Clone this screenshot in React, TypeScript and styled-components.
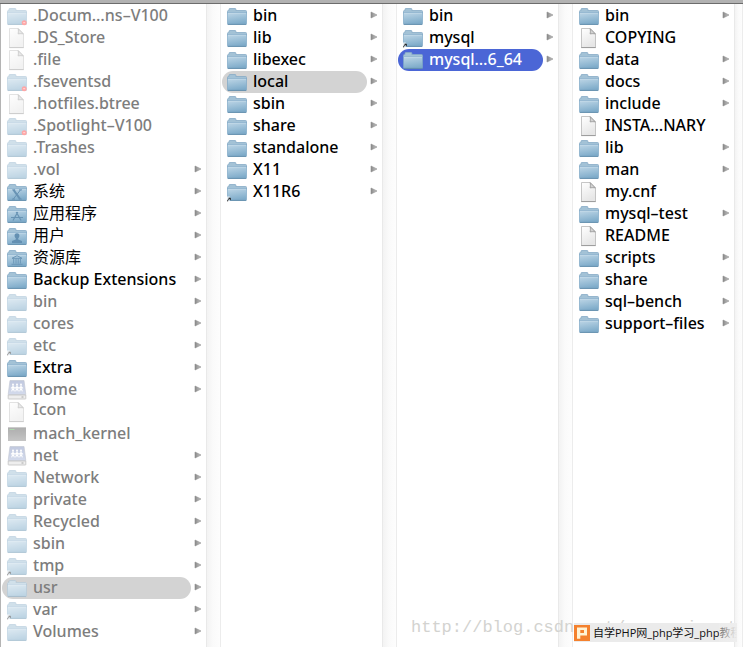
import React, { useState } from "react";
import styled, { createGlobalStyle, css } from "styled-components";

type Kind = "folder" | "file" | "drive" | "exec";
type Badge = "alias" | "locked" | "system" | "apps" | "users" | "library";

interface Entry {
  name: string;
  kind?: Kind;
  badge?: Badge;
  dim?: boolean;
  leaf?: boolean;
  raised?: boolean;
  lang?: string;
}

interface ColumnData {
  label: string;
  entries: Entry[];
  selected?: string;
  tone?: "grey" | "blue";
}

const columns: ColumnData[] = [
  {
    label: "Root",
    selected: "usr",
    entries: [
      { name: ".Docum…ns–V100", dim: true, leaf: true, badge: "locked" },
      { name: ".DS_Store", dim: true, leaf: true, kind: "file" },
      { name: ".file", dim: true, leaf: true, kind: "file" },
      { name: ".fseventsd", dim: true, leaf: true, badge: "locked" },
      { name: ".hotfiles.btree", dim: true, leaf: true, kind: "file" },
      { name: ".Spotlight–V100", dim: true, leaf: true, badge: "locked" },
      { name: ".Trashes", dim: true, leaf: true },
      { name: ".vol", dim: true },
      { name: "系统", badge: "system", lang: "zh" },
      { name: "应用程序", badge: "apps", lang: "zh" },
      { name: "用户", badge: "users", lang: "zh" },
      { name: "资源库", badge: "library", lang: "zh" },
      { name: "Backup Extensions" },
      { name: "bin", dim: true },
      { name: "cores", dim: true },
      { name: "etc", dim: true, badge: "alias" },
      { name: "Extra" },
      { name: "home", dim: true, kind: "drive" },
      { name: "Icon", dim: true, leaf: true, kind: "file", raised: true },
      { name: "mach_kernel", dim: true, leaf: true, kind: "exec" },
      { name: "net", dim: true, kind: "drive" },
      { name: "Network", dim: true },
      { name: "private", dim: true },
      { name: "Recycled", dim: true },
      { name: "sbin", dim: true },
      { name: "tmp", dim: true, badge: "alias" },
      { name: "usr", dim: true },
      { name: "var", dim: true, badge: "alias" },
      { name: "Volumes", dim: true },
    ],
  },
  {
    label: "usr",
    selected: "local",
    entries: [
      { name: "bin" },
      { name: "lib" },
      { name: "libexec" },
      { name: "local" },
      { name: "sbin" },
      { name: "share" },
      { name: "standalone" },
      { name: "X11" },
      { name: "X11R6", badge: "alias" },
    ],
  },
  {
    label: "local",
    selected: "mysql…6_64",
    tone: "blue",
    entries: [{ name: "bin" }, { name: "mysql", badge: "alias" }, { name: "mysql…6_64" }],
  },
  {
    label: "mysql",
    entries: [
      { name: "bin" },
      { name: "COPYING", kind: "file", leaf: true },
      { name: "data" },
      { name: "docs" },
      { name: "include" },
      { name: "INSTA…NARY", kind: "file", leaf: true },
      { name: "lib" },
      { name: "man" },
      { name: "my.cnf", kind: "file", leaf: true },
      { name: "mysql–test" },
      { name: "README", kind: "file", leaf: true },
      { name: "scripts" },
      { name: "share" },
      { name: "sql–bench" },
      { name: "support–files" },
    ],
  },
];

const GlobalStyle = createGlobalStyle`
  *, *::before, *::after { box-sizing: border-box; }
  body { margin: 0; background: #fff; overflow: hidden; }
`;

const Window = styled.main`
  position: relative;
  display: flex;
  flex-direction: column;
  height: 100vh;
  overflow: hidden;
  font-family: "Noto Sans", "Noto Sans CJK SC", sans-serif;
  font-size: 16px;
  font-weight: 500;
  line-height: 22px;
`;

const HeaderEdge = styled.div`
  flex: none;
  height: 4px;
  background: #b2b2b2;
  border-bottom: 1px solid #6c6c6c;
`;

const Browser = styled.div`
  flex: 1;
  display: grid;
  grid-template-columns: 220fr 176fr 176fr 170fr;
  min-height: 0;
  border-left: 1px solid #b4b4b4;
`;

const Pane = styled.section<{ $last: boolean }>`
  display: grid;
  grid-template-columns: minmax(0, 1fr) ${(p) => (p.$last ? 9 : 15)}px;
  min-width: 0;
`;

const List = styled.ul`
  margin: 0;
  padding: 1px 4px 0 1px;
  list-style: none;
`;

const Gutter = styled.div`
  border-left: 1px solid #e9e9e9;
  border-right: 1px solid #ececec;
  background: linear-gradient(90deg, #f3f3f3, #fafafa 45%, #fdfdfd);
`;

const Item = styled.li`
  display: flex;
  align-items: center;
  gap: 3px;
  height: 22px;
`;

const Row = styled.button<{ $dim?: boolean; $tone?: "grey" | "blue" }>`
  flex: 1;
  display: flex;
  align-items: center;
  gap: 6px;
  min-width: 0;
  height: 22px;
  padding: 0 0 0 5px;
  border: 0;
  border-radius: 11px;
  background: transparent;
  color: ${(p) => (p.$dim ? "#7d7d7d" : "#000")};
  font: inherit;
  text-align: left;
  ${(p) => p.$tone === "grey" && css`background: #d3d3d3;`}
  ${(p) => p.$tone === "blue" && css`background: #4b66d6; color: #fff;`}
`;

const Name = styled.span<{ $raised?: boolean }>`
  white-space: nowrap;
  padding-bottom: ${(p) => (p.$raised ? 6 : 2)}px;

  &:lang(zh) {
    font-weight: 400;
  }
`;

const IconSvg = styled.svg`
  flex: none;
  width: 20px;
  height: 22px;
`;

const ArrowSvg = styled.svg`
  flex: none;
  width: 8px;
  height: 10px;
  margin-bottom: 2px;
`;

const HiddenDefs = styled.svg`
  position: absolute;
  width: 0;
  height: 0;
`;

const Watermark = styled.div`
  position: absolute;
  left: 411px;
  bottom: 8px;
  color: #d3d3d0;
  font-family: "Liberation Mono", monospace;
  font-size: 17px;
  font-weight: 400;
  white-space: nowrap;
`;

const SiteTag = styled.a`
  position: absolute;
  right: 6px;
  bottom: 5px;
  display: flex;
  align-items: center;
  gap: 3px;
  width: 163px;
  height: 19px;
  overflow: hidden;
  background: #ebebeb;
  color: #111;
  font-family: "Open Sans", "Noto Sans CJK SC", sans-serif;
  font-size: 11px;
  font-weight: 400;
  line-height: 19px;
  white-space: nowrap;
  text-decoration: none;

  &::after {
    content: "";
    position: absolute;
    inset: 0 0 0 auto;
    width: 18px;
    background: linear-gradient(90deg, rgba(238, 238, 238, 0.4), #eee);
  }
`;

const TagLogo = styled.svg`
  flex: none;
  width: 16px;
  height: 16px;
`;

function Defs() {
  return (
    <HiddenDefs aria-hidden="true">
      <defs>
        <linearGradient id="front" x1="0" y1="0" x2="0.25" y2="1">
          <stop offset="0" stopColor="#bfd7e7" />
          <stop offset="1" stopColor="#7facca" />
        </linearGradient>
        <linearGradient id="page" x1="0" y1="0" x2="0.4" y2="1">
          <stop offset="0" stopColor="#fff" />
          <stop offset="1" stopColor="#e6e6e6" />
        </linearGradient>
        <linearGradient id="steel" x1="0" y1="0" x2="0" y2="1">
          <stop offset="0" stopColor="#5d5d5d" />
          <stop offset="1" stopColor="#8c8c8c" />
        </linearGradient>
        <linearGradient id="disk" x1="0" y1="0" x2="0" y2="1">
          <stop offset="0" stopColor="#8393c0" />
          <stop offset="1" stopColor="#a9b7da" />
        </linearGradient>
        <linearGradient id="arrow" x1="0" y1="0" x2="1" y2="0">
          <stop offset="0" stopColor="#888" />
          <stop offset="1" stopColor="#cacaca" />
        </linearGradient>
      </defs>
    </HiddenDefs>
  );
}

function BadgeArt({ badge }: { badge?: Badge }) {
  const line = { fill: "none", stroke: "#6893b4", strokeWidth: 1.2 };
  switch (badge) {
    case "alias":
      return (
        <>
          <path d="M0 15.5h2.8v4.8H0z" fill="#fff" opacity=".75" />
          <path d="M.6 20.4v-1.2l1.6-1.6M1.6 17h1.8v1.8z" fill="#222" stroke="#222" strokeWidth=".7" />
        </>
      );
    case "locked":
      return (
        <>
          <circle cx="17.2" cy="17.7" r="2.5" fill="#ff5050" />
          <path d="M16.2 17.7h2" stroke="#fff" strokeWidth=".6" />
        </>
      );
    case "system":
      return (
        <>
          <path d="M6.5 8.9l6.6 9.2" {...line} strokeWidth="2" />
          <path d="M13.5 8.9L6.3 18.1M5.2 8.9h3M12 8.9h3M5 18.1h3M11.8 18.1h3" {...line} strokeWidth="1" />
        </>
      );
    case "apps":
      return <path d="M10.8 9L6 17.5M9.2 9l4.9 8.5M4 14.5h12" {...line} />;
    case "users":
      return (
        <path
          d="M10 8.2c-1.8 0-2.6 1.3-2.4 2.8.1 1.1.6 1.8 1.2 2.3v1.2L5 15.9V18h10v-2.1l-3.8-1.4v-1.2c.6-.5 1.1-1.2 1.2-2.3.2-1.5-.6-2.8-2.4-2.8z"
          fill="#6490b2"
        />
      );
    case "library":
      return <path d="M5 11.3l5-2.6 5 2.6zM6.7 11.5v5M9 11.5v5M11.2 11.5v5M13.4 11.5v5M4.5 17.3h11" {...line} strokeWidth=".9" />;
    default:
      return null;
  }
}

function EntryIcon({ kind = "folder", badge, dim }: Entry) {
  return (
    <IconSvg viewBox="0 0 20 22" aria-hidden="true">
      {kind === "folder" && dim && <path d="M.5 5.5h1.7v-2h6.6v2h10.7v14H.5z" fill="#fff" />}
      <g opacity={dim ? 0.5 : 1}>
        {kind === "folder" && (
          <>
            <path
              d="M.5 8V6.4q0-.9.9-.9h.6V4.3q0-.8.8-.8h5.3q.8 0 .8.8v1.2h9.7q.9 0 .9.9V8z"
              fill="#a3c2d6"
              stroke="#86abc6"
              strokeWidth=".8"
            />
            <path d="M.5 7.5h19v11.2q0 .8-.8.8H1.3q-.8 0-.8-.8z" fill="url(#front)" stroke="#7ea8c5" strokeWidth=".7" />
            <path d="M1 8.2h18" stroke="#cde0ed" strokeWidth=".6" />
            <path d="M.8 19.4h18.4" stroke="#5d89a8" strokeWidth=".8" />
            <BadgeArt badge={badge} />
          </>
        )}
        {kind === "file" && (
          <>
            <path d="M2.5 1.5h8.7l5.3 5.3v13.7h-14z" fill="url(#page)" stroke="#b8b8b8" strokeWidth=".8" />
            <path d="M11.2 1.7q.5 2.6-.1 5.2 2.8-.5 5.2 0z" fill="#d2d2d2" stroke="#8c8c8c" strokeWidth=".7" />
            <path d="M2.2 20.6h14.5" stroke="#8f8f8f" strokeWidth=".8" />
          </>
        )}
        {kind === "drive" && (
          <>
            <path d="M3 1.5h14l1.8 14H1.2z" fill="url(#disk)" stroke="#8e96ad" strokeWidth=".7" />
            <path d="M1.2 16h17.6v3.5q0 .5-.5.5H1.7q-.5 0-.5-.5z" fill="#dedede" stroke="#868686" strokeWidth=".8" />
            <path d="M14.5 18h2" stroke="#555" />
            <g stroke="#fff" strokeWidth="1.1" fill="none">
              <path d="M6 6.3v3M4.6 12.4L6 9l1.4 3.4M10 6.3v3M8.6 12.4L10 9l1.4 3.4M14 6.3v3M12.6 12.4L14 9l1.4 3.4M4 9.3l2-1.8 2 1.8 2-1.8 2 1.8 2-1.8 2 1.8" />
            </g>
            <g fill="#fff">
              <circle cx="6" cy="5.4" r="1" />
              <circle cx="10" cy="5.4" r="1" />
              <circle cx="14" cy="5.4" r="1" />
            </g>
          </>
        )}
        {kind === "exec" && (
          <>
            <rect x="1" y="4" width="18" height="14" fill="url(#steel)" />
            <path d="M1 4.5h18" stroke="#999" />
            <path d="M2.5 6.5h5" stroke="#62b562" />
          </>
        )}
      </g>
    </IconSvg>
  );
}

function Arrow() {
  return (
    <ArrowSvg viewBox="0 0 8 10" aria-hidden="true">
      <path d="M1 2l6 3-6 3z" fill="url(#arrow)" stroke="#8f8f8f" strokeWidth=".6" />
    </ArrowSvg>
  );
}

function ColumnPane({ data, last }: { data: ColumnData; last: boolean }) {
  const [selected, setSelected] = useState(data.selected);
  return (
    <Pane aria-label={data.label} $last={last}>
      <List>
        {data.entries.map((entry) => (
          <Item key={entry.name}>
            <Row
              type="button"
              $dim={entry.dim}
              $tone={entry.name === selected ? data.tone ?? "grey" : undefined}
              aria-pressed={entry.name === selected}
              onClick={() => setSelected(entry.name)}
            >
              <EntryIcon {...entry} />
              <Name lang={entry.lang} $raised={entry.raised}>
                {entry.name}
              </Name>
            </Row>
            {entry.leaf ? <ArrowSvg aria-hidden="true" /> : <Arrow />}
          </Item>
        ))}
      </List>
      <Gutter />
    </Pane>
  );
}

export default function App() {
  return (
    <Window>
      <GlobalStyle />
      <Defs />
      <HeaderEdge />
      <Browser>
        {columns.map((column, i) => (
          <ColumnPane key={column.label} data={column} last={i === columns.length - 1} />
        ))}
      </Browser>
      <Watermark>http://blog.csdn.net/normanisont</Watermark>
      <SiteTag href="#">
        <TagLogo viewBox="0 0 16 16" aria-hidden="true">
          <rect width="16" height="16" fill="#f4812e" />
          <path d="M3 2.5h10v8H6.3v3.2H3zM6.3 5v3H10V5z" fill="#fff3d4" fillRule="evenodd" />
        </TagLogo>
        自学PHP网_php学习_php教程
      </SiteTag>
    </Window>
  );
}
